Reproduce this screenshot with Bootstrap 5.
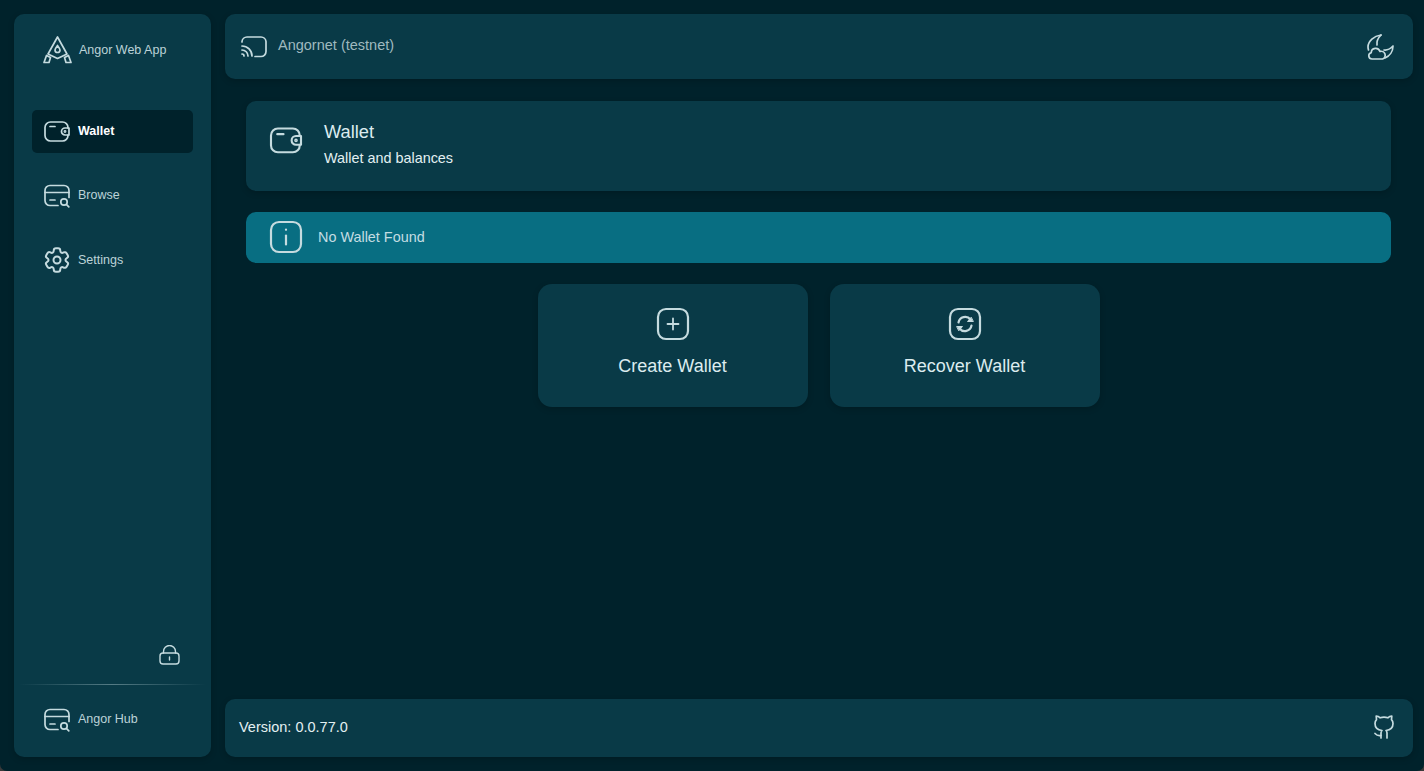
<!DOCTYPE html>
<html lang="en">
<head>
  <meta charset="UTF-8">
  <meta name="viewport" content="width=device-width, initial-scale=1.0">
  <title>Angor Web App</title>
  <link href="https://cdn.jsdelivr.net/npm/bootstrap@5.3.3/dist/css/bootstrap.min.css" rel="stylesheet">
  <style>
    html, body { height: 100%; }
    html { background: #3a3a3a; }
    body {
      background: transparent;
      color: #cfe4e8;
      font-family: "Liberation Sans", Arial, sans-serif;
      overflow: hidden;
    }
    .app-shell { height: 771px; padding: 14px 11px 14px 14px; gap: 14px; background: #00222b; border-radius: 0 0 7px 7px; }
    .panel {
      background: #093a47;
      box-shadow: 0 2px 6px rgba(0, 0, 0, .18);
    }
    .side-panel { width: 197px; border-radius: 10px; flex: none; }
    .brand-row { height: 72px; padding: 0 0 0 29px; gap: 7px; font-size: 12.5px; color: #bcd3d8; }
    .nav-stack { padding: 24px 18px 0; gap: 21px; }
    .nav-entry {
      height: 43px; padding: 0 12px; gap: 8px; border-radius: 5px;
      color: #bcd3d8; font-size: 12.5px; text-decoration: none;
    }
    .nav-entry.active-entry { background: #00222b; color: #fff; font-weight: 700; }
    .gear-entry { padding-left: 11px; gap: 7px; }
    .gear-entry span { margin-top: 1px; }
    .ico { fill: none; stroke: currentColor; stroke-width: 1.7; stroke-linecap: round; stroke-linejoin: round; flex: none; }
    .ico-soft { color: #c5dbdf; }
    .ico-thick { stroke-width: 2.2; }
    .ico-fine { stroke-width: 1.4; }
    .lock-row { padding: 0 31px 19px 0; }
    .side-rule { height: 1px; margin: 0 5px; background: linear-gradient(90deg, rgba(190,215,220,0), rgba(190,215,220,.42) 50%, rgba(190,215,220,0)); }
    .hub-row { height: 72px; padding: 0 0 3px 30px; }
    .hub-row .nav-entry { padding: 0; }
    .main-col { min-width: 0; }
    .top-bar { height: 65px; border-radius: 10px; padding: 0 19px 0 15px; flex: none; }
    .net-label { font-size: 14.5px; color: #9fb9bf; margin-left: 11px; margin-bottom: 2px; }
    .page-body { padding: 22px 22px 0 21px; gap: 21px; }
    .title-card { height: 90px; border-radius: 10px; padding: 0 0 0 23px; gap: 21px; }
    .title-card svg { margin-bottom: 10px; }
    .title-text { margin-bottom: 4px; }
    .title-main { font-size: 18.3px; line-height: 22px; color: #dcecef; }
    .title-sub { font-size: 14.4px; line-height: 20px; margin-top: 5px; color: #e3f0f2; }
    .info-strip { height: 51px; border-radius: 10px; background: #086e82; padding: 0 0 0 23px; gap: 15px; font-size: 14.4px; color: #c4dde2; }
    .info-strip svg { margin-bottom: 2px; }
    .action-row { gap: 22px; }
    .action-card {
      width: 270px; height: 123px; border-radius: 14px; border: 0; color: #dcecef;
      font-size: 18px; padding: 23px 0 0; gap: 12px;
    }
    .foot-bar { height: 58px; border-radius: 10px; padding: 0 17px 0 14px; flex: none; font-size: 14.5px; color: #e3f0f2; }
    .foot-bar span { margin-bottom: 1px; }
    .foot-bar svg { margin-bottom: 2px; }
  </style>
</head>
<body>
  <div class="app-shell d-flex">
    <aside class="panel side-panel d-flex flex-column">
      <div class="brand-row d-flex align-items-center">
        <svg class="ico ico-soft" width="29" height="28" viewBox="0 0 29 28" stroke-width="1.5">
          <path d="M14.500 1 L5 18 L14.500 22.500 L24 18 Z"/>
          <path d="M14.500 9.500 C13 11.500 12 12.800 12 14 a2.500 2.500 0 0 0 5 0 C17 12.800 16 11.500 14.500 9.500 Z"/>
          <path d="M3.500 19.500 L7.500 21.500 L6 26.500 L1 26.500 Z"/>
          <path d="M25.500 19.500 L21.500 21.500 L23 26.500 L28 26.500 Z"/>
        </svg>
        <span>Angor Web App</span>
      </div>
      <nav class="nav-stack d-flex flex-column">
        <a href="#" class="nav-entry active-entry d-flex align-items-center">
          <svg class="ico ico-soft" width="26" height="24" viewBox="0 0 26 24">
            <path d="M24 8V7.500A5.500 5.500 0 0 0 18.500 2h-12A5.500 5.500 0 0 0 1 7.500v8A5.500 5.500 0 0 0 6.500 21h12a5.500 5.500 0 0 0 5.500-5.500V15"/>
            <path d="M6 6.500h5"/>
            <path d="M25 8h-4a3.500 3.500 0 0 0 0 7h4z"/>
            <circle cx="21" cy="11.500" r=".6"/>
          </svg>
          <span>Wallet</span>
        </a>
        <a href="#" class="nav-entry d-flex align-items-center">
          <svg class="ico ico-soft" width="26" height="24" viewBox="0 0 26 24">
            <path d="M14 21.500H6a5 5 0 0 1-5-5V6.500a5 5 0 0 1 5-5h14a5 5 0 0 1 5 5v7"/>
            <path d="M1 8.500h24"/>
            <path d="M6 16h5"/>
            <circle cx="20" cy="18" r="3.200"/>
            <path d="M22.600 20.600 24.800 22.800"/>
          </svg>
          <span>Browse</span>
        </a>
        <a href="#" class="nav-entry gear-entry d-flex align-items-center">
          <svg class="ico ico-soft" width="28" height="28" viewBox="0 0 24 24" stroke-width="1.400">
            <circle cx="12" cy="12" r="3"/>
            <path transform="rotate(90 12 12)" d="M2 12.880v-1.760c0-1.040.850-1.900 1.900-1.900 1.810 0 2.550-1.280 1.640-2.850-.520-.9-.210-2.070.7-2.590l1.730-.99c.790-.470 1.810-.190 2.280.6l.110.190c.9 1.570 2.380 1.570 3.290 0l.110-.190c.470-.790 1.490-1.070 2.280-.6l1.730.99c.910.520 1.220 1.690.7 2.590-.910 1.570-.170 2.850 1.640 2.850 1.040 0 1.900.850 1.900 1.900v1.760c0 1.040-.850 1.900-1.900 1.900-1.810 0-2.550 1.280-1.640 2.850.520.910.210 2.070-.7 2.590l-1.730.99c-.790.470-1.810.190-2.280-.6l-.110-.190c-.9-1.570-2.380-1.570-3.290 0l-.110.190c-.470.790-1.490 1.070-2.280.6l-1.730-.99a1.899 1.899 0 0 1-.7-2.590c.910-1.570.170-2.850-1.640-2.850-1.050 0-1.900-.860-1.900-1.900Z"/>
          </svg>
          <span>Settings</span>
        </a>
      </nav>
      <div class="lock-row mt-auto d-flex justify-content-end">
        <svg class="ico ico-fine ico-soft" width="21" height="20" viewBox="0 0 21 20">
          <rect x="1" y="8" width="19" height="11" rx="3"/>
          <path d="M4.500 8V6.500a6 6 0 0 1 12 0V8"/>
          <path d="M10.500 12v3"/>
        </svg>
      </div>
      <div class="side-rule"></div>
      <div class="hub-row d-flex align-items-center">
        <a href="#" class="nav-entry d-flex align-items-center">
          <svg class="ico ico-soft" width="26" height="24" viewBox="0 0 26 24">
            <path d="M14 21.500H6a5 5 0 0 1-5-5V6.500a5 5 0 0 1 5-5h14a5 5 0 0 1 5 5v7"/>
            <path d="M1 8.500h24"/>
            <path d="M6 16h5"/>
            <circle cx="20" cy="18" r="3.200"/>
            <path d="M22.600 20.600 24.800 22.800"/>
          </svg>
          <span>Angor Hub</span>
        </a>
      </div>
    </aside>

    <div class="main-col flex-grow-1 d-flex flex-column">
      <header class="panel top-bar d-flex align-items-center">
        <svg class="ico ico-soft" width="27" height="24" viewBox="0 0 27 24">
          <path d="M2 7V6.500A5 5 0 0 1 7 2h14a5 5 0 0 1 5 4.500v10a5 5 0 0 1-5 5h-6"/>
          <path d="M2 11a10 10 0 0 1 10 10"/>
          <path d="M2 15a6 6 0 0 1 6 6"/>
          <path d="M2 19a2 2 0 0 1 2 2"/>
        </svg>
        <span class="net-label">Angornet (testnet)</span>
        <svg class="ico ico-soft ms-auto" width="28" height="28" viewBox="0 0 28 28">
          <path d="M15 2C8 3 2 8 2 14c0 1 .2 2 .5 3"/>
          <path d="M15 2c-3.500 3.500-4.500 7-4 10"/>
          <path d="M18 17c3 .5 6-1 9-4 0 5-3 10-8 12"/>
          <path d="M6 26a3.200 3.200 0 0 1-.8-6.300 4.500 4.500 0 0 1 8.800-1.200 3.800 3.800 0 0 1 2.500 7.500z"/>
        </svg>
      </header>

      <main class="page-body flex-grow-1 d-flex flex-column">
        <section class="panel title-card d-flex align-items-center">
          <svg class="ico ico-soft" width="34" height="30" viewBox="0 0 26 24" stroke-width="1.400">
            <path d="M24 8V7.500A5.500 5.500 0 0 0 18.500 2h-12A5.500 5.500 0 0 0 1 7.500v8A5.500 5.500 0 0 0 6.500 21h12a5.500 5.500 0 0 0 5.500-5.500V15"/>
            <path d="M6 6.500h5"/>
            <path d="M25 8h-4a3.500 3.500 0 0 0 0 7h4z"/>
            <circle cx="21" cy="11.500" r=".6"/>
          </svg>
          <div class="title-text">
            <div class="title-main">Wallet</div>
            <div class="title-sub">Wallet and balances</div>
          </div>
        </section>

        <div class="info-strip d-flex align-items-center">
          <svg class="ico ico-thick ico-soft" width="34" height="34" viewBox="0 0 34 34">
            <rect x="2" y="2" width="30" height="30" rx="8"/>
            <path d="M17 15.500v9"/>
            <path d="M17 9.500v.3"/>
          </svg>
          <span>No Wallet Found</span>
        </div>

        <div class="action-row d-flex justify-content-center">
          <button class="panel action-card d-flex flex-column align-items-center" type="button">
            <svg class="ico ico-thick ico-soft" width="34" height="34" viewBox="0 0 34 34">
              <rect x="2" y="2" width="30" height="30" rx="8"/>
              <path d="M17 11.500v11M11.500 17h11" stroke-width="1.800"/>
            </svg>
            <span>Create Wallet</span>
          </button>
          <button class="panel action-card d-flex flex-column align-items-center" type="button">
            <svg class="ico ico-thick ico-soft" width="34" height="34" viewBox="0 0 34 34">
              <rect x="2" y="2" width="30" height="30" rx="8"/>
              <path d="M10.500 15.500a6.800 6.800 0 0 1 12-3"/>
              <path d="M23.500 18.500a6.800 6.800 0 0 1-12 3"/>
              <path d="M25 14.500h-5.500l3.500-4z" fill="currentColor" stroke-width="1"/>
              <path d="M9 19.500h5.500l-3.500 4z" fill="currentColor" stroke-width="1"/>
            </svg>
            <span>Recover Wallet</span>
          </button>
        </div>
      </main>

      <footer class="panel foot-bar d-flex align-items-center justify-content-between">
        <span>Version: 0.0.77.0</span>
        <svg class="ico ico-soft" width="24" height="26" viewBox="0 0 24 26">
          <path d="M9 24v-5c0-1 .3-1.800 1-2.500-3.500-.4-7-2-7-7 0-1.500.5-2.800 1.500-3.800L4.200 2c1.500 0 3 .8 4 1.800a13 13 0 0 1 7.600 0c1-1 2.500-1.800 4-1.800l-.3 3.700c1 1 1.500 2.300 1.500 3.800 0 5-3.500 6.600-7 7 .7.7 1 1.500 1 2.500v5"/>
          <path d="M9 21.500c-3 .6-4.500-.3-6-2"/>
        </svg>
      </footer>
    </div>
  </div>
</body>
</html>
